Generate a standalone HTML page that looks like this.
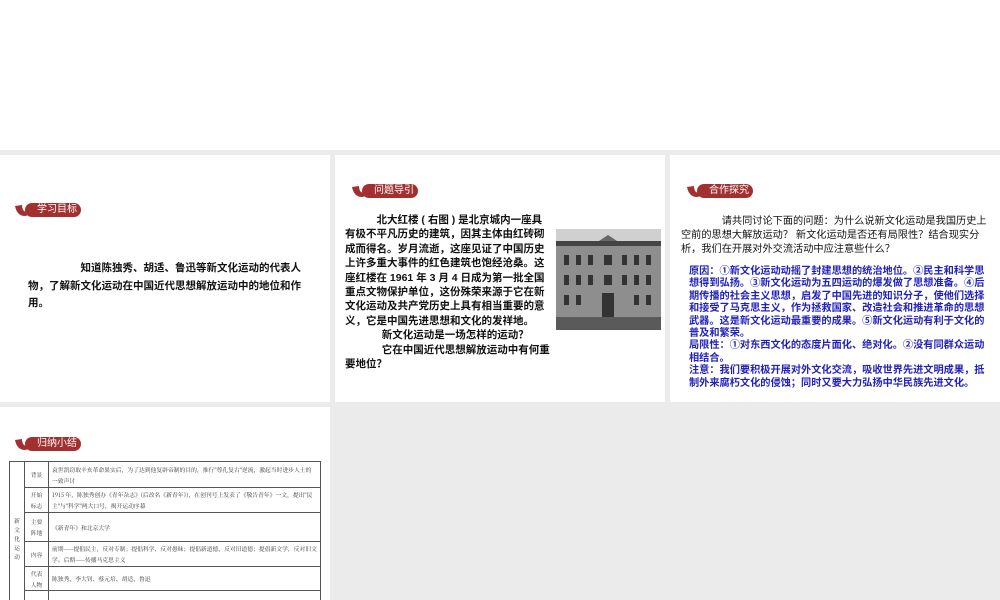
<!DOCTYPE html>
<html style="width:1000px;height:600px;overflow:hidden"><head><meta charset="utf-8"><style>
*{margin:0;padding:0;box-sizing:border-box}
body{width:1000px;height:600px;background:#ebebeb;position:relative;overflow:hidden;font-family:"Liberation Sans","Noto Sans CJK SC",sans-serif;color:#111}
.p{position:absolute;background:#fff}
.b{position:absolute;height:14px;width:66px}
.b .pill{position:absolute;left:10px;top:0;width:56px;height:14px;background:#a33030;border-radius:7px;color:#fff;font-size:10px;line-height:14px;padding-left:12px}
.b svg{position:absolute;left:0;top:0}
.t{position:absolute;font-size:10.5px;line-height:16.5px;font-weight:bold}
.blue{color:#2222bb;font-size:10.2px;line-height:12.4px}
table{position:absolute;left:9px;top:461px;width:312px;border-collapse:collapse;font-family:"Noto Serif CJK SC",serif;font-size:5.8px;color:#333;table-layout:fixed}
td{border:1px solid #555;padding:0 3px;line-height:11px;overflow:hidden}
td.h{text-align:center;width:24px;padding:0}
</style></head><body>
<div class="p" style="left:0;top:0;width:1000px;height:150px"></div>
<div class="p" style="left:0;top:155px;width:330px;height:247px"></div>
<div class="p" style="left:335px;top:155px;width:330px;height:247px"></div>
<div class="p" style="left:670px;top:155px;width:330px;height:247px"></div>
<div class="p" style="left:0;top:407px;width:330px;height:193px"></div>

<div class="b" style="left:15px;top:203px"><div class="pill">学习目标</div><svg width="24" height="14"><path d="M0 3 Q2 13 10 13 Q17 12 22 0 L19 0 Q14 9 11 9 Q7 8 7 2 Z" fill="#a33030"/></svg></div>
<div class="t" style="left:28px;top:260px;width:292px;line-height:17.5px">&emsp;&emsp;&emsp;&emsp;&emsp;知道陈独秀、胡适、鲁迅等新文化运动的代表人物，了解新文化运动在中国近代思想解放运动中的地位和作用。</div>

<div class="b" style="left:352px;top:184px"><div class="pill">问题导引</div><svg width="24" height="14"><path d="M0 3 Q2 13 10 13 Q17 12 22 0 L19 0 Q14 9 11 9 Q7 8 7 2 Z" fill="#a33030"/></svg></div>
<div class="t" style="left:345px;top:213px;width:206px;line-height:14.4px">&emsp;&emsp;&emsp;北大红楼 ( 右图 ) 是北京城内一座具有极不平凡历史的建筑，因其主体由红砖砌成而得名。岁月流逝，这座见证了中国历史上许多重大事件的红色建筑也饱经沧桑。这座红楼在 1961 年 3 月 4 日成为第一批全国重点文物保护单位，这份殊荣来源于它在新文化运动及共产党历史上具有相当重要的意义，它是中国先进思想和文化的发祥地。<br>&emsp;&emsp;&emsp;&ensp;新文化运动是一场怎样的运动？<br>&emsp;&emsp;&emsp;&ensp;它在中国近代思想解放运动中有何重要地位？</div>
<svg style="position:absolute;left:556px;top:229px" width="105" height="101">
<rect width="105" height="101" fill="#d0d0d0"/>
<rect x="0" y="14" width="105" height="78" fill="#8e8e8e"/>
<path d="M40 14 L52 6 L64 14 Z" fill="#666"/>
<rect x="0" y="12" width="105" height="5" fill="#444"/>
<g fill="#333"><rect x="8" y="26" width="5" height="10"/><rect x="20" y="26" width="5" height="10"/><rect x="32" y="26" width="5" height="10"/><rect x="48" y="26" width="8" height="10"/><rect x="66" y="26" width="5" height="10"/><rect x="78" y="26" width="5" height="10"/><rect x="90" y="26" width="5" height="10"/>
<rect x="8" y="46" width="5" height="10"/><rect x="20" y="46" width="5" height="10"/><rect x="32" y="46" width="5" height="10"/><rect x="48" y="46" width="8" height="10"/><rect x="66" y="46" width="5" height="10"/><rect x="78" y="46" width="5" height="10"/><rect x="90" y="46" width="5" height="10"/>
<rect x="8" y="66" width="5" height="10"/><rect x="20" y="66" width="5" height="10"/><rect x="46" y="64" width="12" height="28"/><rect x="78" y="66" width="5" height="10"/><rect x="90" y="66" width="5" height="10"/></g>
<rect x="0" y="88" width="105" height="13" fill="#5a5a5a"/>
</svg>

<div class="b" style="left:687px;top:184px"><div class="pill">合作探究</div><svg width="24" height="14"><path d="M0 3 Q2 13 10 13 Q17 12 22 0 L19 0 Q14 9 11 9 Q7 8 7 2 Z" fill="#a33030"/></svg></div>
<div class="t" style="left:681px;top:215px;width:310px;font-weight:normal;line-height:14px;font-size:10.2px">&emsp;&emsp;&emsp;&emsp;请共同讨论下面的问题：为什么说新文化运动是我国历史上空前的思想大解放运动？ 新文化运动是否还有局限性？结合现实分析，我们在开展对外交流活动中应注意些什么？</div>
<div class="t blue" style="left:689px;top:266px;width:298px">原因：①新文化运动动摇了封建思想的统治地位。②民主和科学思想得到弘扬。③新文化运动为五四运动的爆发做了思想准备。④后期传播的社会主义思想，启发了中国先进的知识分子，使他们选择和接受了马克思主义，作为拯救国家、改造社会和推进革命的思想武器。这是新文化运动最重要的成果。⑤新文化运动有利于文化的普及和繁荣。<br>局限性：①对东西文化的态度片面化、绝对化。②没有同群众运动相结合。<br>注意：我们要积极开展对外文化交流，吸收世界先进文明成果，抵制外来腐朽文化的侵蚀；同时又要大力弘扬中华民族先进文化。</div>

<div class="b" style="left:15px;top:437px"><div class="pill">归纳小结</div><svg width="24" height="14"><path d="M0 3 Q2 13 10 13 Q17 12 22 0 L19 0 Q14 9 11 9 Q7 8 7 2 Z" fill="#a33030"/></svg></div>
<table>
<colgroup><col style="width:15px"><col style="width:24px"><col></colgroup>
<tr style="height:26px"><td rowspan="6" style="text-align:center;padding:0;line-height:9px">新<br>文<br>化<br>运<br>动</td><td class="h">背景</td><td>袁世凯窃取辛亥革命果实后，为了达到他复辟帝制的目的，推行"尊孔复古"逆流，激起当时进步人士的一致声讨</td></tr>
<tr style="height:25px"><td class="h">开始<br>标志</td><td>1915 年，陈独秀创办《青年杂志》(后改名《新青年》)，在创刊号上发表了《敬告青年》一文，提出"民主"与"科学"两大口号，揭开运动序幕</td></tr>
<tr style="height:29px"><td class="h">主要<br>阵地</td><td>《新青年》和北京大学</td></tr>
<tr style="height:25px"><td class="h">内容</td><td>前期——提倡民主，反对专制；提倡科学，反对愚昧；提倡新道德，反对旧道德；提倡新文学，反对旧文学。后期——传播马克思主义</td></tr>
<tr style="height:24px"><td class="h">代表<br>人物</td><td>陈独秀、李大钊、蔡元培、胡适、鲁迅</td></tr>
<tr style="height:24px"><td class="h">性质</td><td>是一次空前的思想解放运动</td></tr>
</table>
</body></html>
